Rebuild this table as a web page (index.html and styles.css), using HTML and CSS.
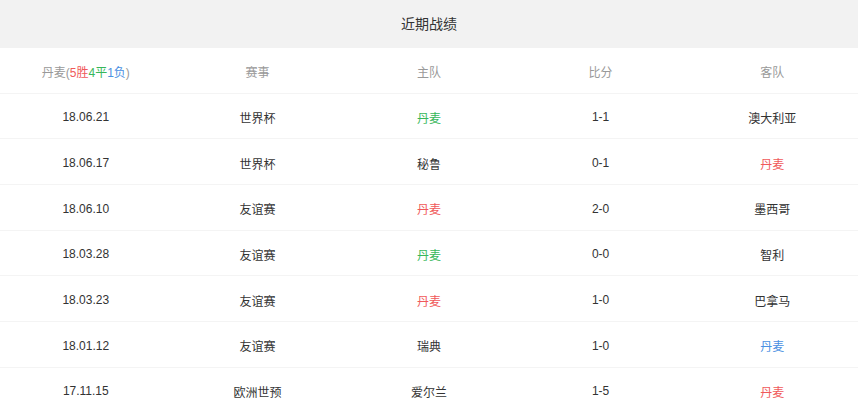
FILE: index.html
```html
<!DOCTYPE html>
<html lang="zh">
<head>
<meta charset="utf-8">
<title>近期战绩</title>
<link rel="stylesheet" href="styles.css">
</head>
<body>
<div class="panel">
  <div class="title">近期战绩</div>
  <div class="row head">
    <div class="cell">丹麦(<span class="red">5胜</span><span class="green">4平</span><span class="blue">1负</span>)</div>
    <div class="cell">赛事</div>
    <div class="cell">主队</div>
    <div class="cell">比分</div>
    <div class="cell">客队</div>
  </div>
  <div class="row"><div class="cell">18.06.21</div><div class="cell">世界杯</div><div class="cell green">丹麦</div><div class="cell">1-1</div><div class="cell">澳大利亚</div></div>
  <div class="row"><div class="cell">18.06.17</div><div class="cell">世界杯</div><div class="cell">秘鲁</div><div class="cell">0-1</div><div class="cell red">丹麦</div></div>
  <div class="row"><div class="cell">18.06.10</div><div class="cell">友谊赛</div><div class="cell red">丹麦</div><div class="cell">2-0</div><div class="cell">墨西哥</div></div>
  <div class="row"><div class="cell">18.03.28</div><div class="cell">友谊赛</div><div class="cell green">丹麦</div><div class="cell">0-0</div><div class="cell">智利</div></div>
  <div class="row"><div class="cell">18.03.23</div><div class="cell">友谊赛</div><div class="cell red">丹麦</div><div class="cell">1-0</div><div class="cell">巴拿马</div></div>
  <div class="row"><div class="cell">18.01.12</div><div class="cell">友谊赛</div><div class="cell">瑞典</div><div class="cell">1-0</div><div class="cell blue">丹麦</div></div>
  <div class="row"><div class="cell">17.11.15</div><div class="cell">欧洲世预</div><div class="cell">爱尔兰</div><div class="cell">1-5</div><div class="cell red">丹麦</div></div>
</div>
</body>
</html>
```
FILE: styles.css
```css
html, body {
  margin: 0;
  padding: 0;
  background: #fff;
}
body {
  font-family: "Liberation Sans", "Noto Sans CJK SC", sans-serif;
  font-size: 12px;
  color: #333;
}
.panel {
  width: 858px;
}
.title {
  height: 48px;
  line-height: 48px;
  background: #f2f2f2;
  text-align: center;
  font-size: 14px;
  color: #333;
}
.row {
  display: grid;
  grid-template-columns: repeat(5, 1fr);
  height: 44.67px;
  border-bottom: 1px solid #f4f4f4;
  align-items: center;
}
.row.head {
  color: #999;
}
.cell {
  text-align: center;
  padding-top: 3px;
}
.red { color: #f0595a; }
.green { color: #37b75a; }
.blue { color: #4a90e2; }
```
